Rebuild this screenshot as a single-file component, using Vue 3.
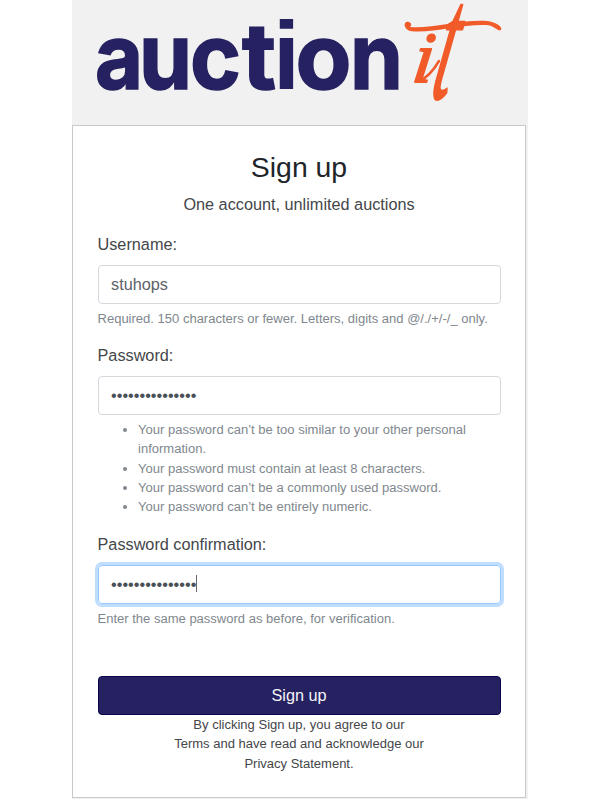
<script setup>
const rules = [
  'Your password can’t be too similar to your other personal information.',
  'Your password must contain at least 8 characters.',
  'Your password can’t be a commonly used password.',
  'Your password can’t be entirely numeric.',
]
const mask = '•'.repeat(15)
</script>

<template>
  <main class="page">
    <header class="brand">
      <svg class="logo" viewBox="0 0 456 125" role="img" aria-label="auction it">
        <g class="word">
          <text x="23" y="89" textLength="48" lengthAdjust="spacingAndGlyphs">a</text>
          <text x="67" y="89" textLength="53" lengthAdjust="spacingAndGlyphs">u</text>
          <text x="118" y="89" textLength="51" lengthAdjust="spacingAndGlyphs">c</text>
          <text x="170" y="89" textLength="34" lengthAdjust="spacingAndGlyphs">t</text>
          <text class="square-dot" x="201" y="89" textLength="27" lengthAdjust="spacingAndGlyphs">i</text>
          <text x="223.500" y="89" textLength="56" lengthAdjust="spacingAndGlyphs">o</text>
          <text x="278" y="89" textLength="53" lengthAdjust="spacingAndGlyphs">n</text>
        </g>
        <g class="script">
          <text class="small-i" transform="translate(339 82) skewX(-8)">i</text>
          <text class="tall-t" transform="translate(357 98) skewX(-12) scale(.4 1)">t</text>
        </g>
        <path class="swash" d="M347 81C353 79 361 71 367 61" />
        <path class="flourish" d="M337 22C331 20 331 29 338 31C358 34 389 24 414 25C422 25 426 32 429 30C431 27 424 22 415 21C390 19 360 29 338 27Q341 24 337 22Z" />
      </svg>
    </header>

    <section class="card">
      <h1>Sign up</h1>
      <p class="lead">One account, unlimited auctions</p>
      <form>
        <div class="field">
          <label>Username:</label>
          <div class="control">stuhops</div>
          <small>Required. 150 characters or fewer. Letters, digits and @/./+/-/_ only.</small>
        </div>
        <div class="field">
          <label>Password:</label>
          <div class="control masked">{{ mask }}</div>
          <ul>
            <li v-for="rule in rules" :key="rule">{{ rule }}</li>
          </ul>
        </div>
        <div class="field last">
          <label>Password confirmation:</label>
          <div class="control masked focused">{{ mask }}<span class="caret"></span></div>
          <small>Enter the same password as before, for verification.</small>
        </div>
        <button type="button">Sign up</button>
        <p class="terms">By clicking Sign up, you agree to our<br>Terms and have read and acknowledge our<br>Privacy Statement.</p>
      </form>
    </section>
  </main>
</template>

<style>
body { margin: 0; background: #fff; }
</style>

<style scoped>
* { box-sizing: border-box; }
.page {
  width: 456px;
  height: 799px;
  margin: 0 auto;
  overflow: hidden;
  background: #f1f1f1;
  font-family: "Liberation Sans", Arial, sans-serif;
  font-size: 16.26px;
  line-height: 24px;
  color: #444649;
}
.brand { height: 125px; }
.logo { display: block; width: 456px; height: 125px; }
.word {
  font-family: Inter, sans-serif;
  font-weight: 700;
  font-size: 91px;
  fill: #262261;
  stroke: #262261;
  stroke-width: 1.6;
}
.square-dot {
  font-family: "Liberation Sans", Arial, sans-serif;
  font-size: 97px;
  stroke-width: 0;
}
.script {
  font-family: "Liberation Serif", serif;
  font-style: italic;
  font-weight: 400;
  fill: #f15a29;
  stroke: #f15a29;
  stroke-linejoin: round;
}
.small-i { font-size: 72px; stroke-width: 1.8; }
.tall-t { font-size: 165px; stroke-width: 3; }
.swash { fill: none; stroke: #f15a29; stroke-width: 2.5; stroke-linecap: round; }
.flourish { fill: #f15a29; }
.card {
  width: 454px;
  height: 673px;
  padding: 24px 24.5px;
  border: 1px solid #c8c9ca;
  background: #fff;
}
h1 {
  margin: 0 0 7.5px;
  font-size: 28.4px;
  line-height: 34px;
  font-weight: 400;
  text-align: center;
  color: #212529;
}
.lead { margin: 0 0 16.5px; text-align: center; }
.field { margin-bottom: 15.5px; }
label { display: block; margin-bottom: 9px; }
.control {
  display: flex;
  align-items: center;
  height: 38.5px;
  padding: 0 12.5px 1px;
  border: 1px solid #d4d9de;
  border-radius: 4px;
  color: #5c6269;
}
.masked { color: #495057; }
.focused { border-color: #98c8ff; box-shadow: 0 0 0 3px #bfdeff; }
.caret { width: 1px; height: 17px; background: #666; }
small, ul, .terms { font-size: 13.03px; line-height: 19.35px; }
small { display: block; margin-top: 5px; color: #80878e; }
ul { margin: 5px 0 0; padding-left: 40.5px; color: #80878e; }
.last { margin-bottom: 48.5px; }
button {
  display: block;
  width: 100%;
  height: 38.5px;
  padding: 0 0 2px;
  border: 1px solid #0c054e;
  border-radius: 4px;
  background: #262261;
  color: #f4f4f7;
  font: inherit;
}
.terms { margin: 0; text-align: center; }
</style>
